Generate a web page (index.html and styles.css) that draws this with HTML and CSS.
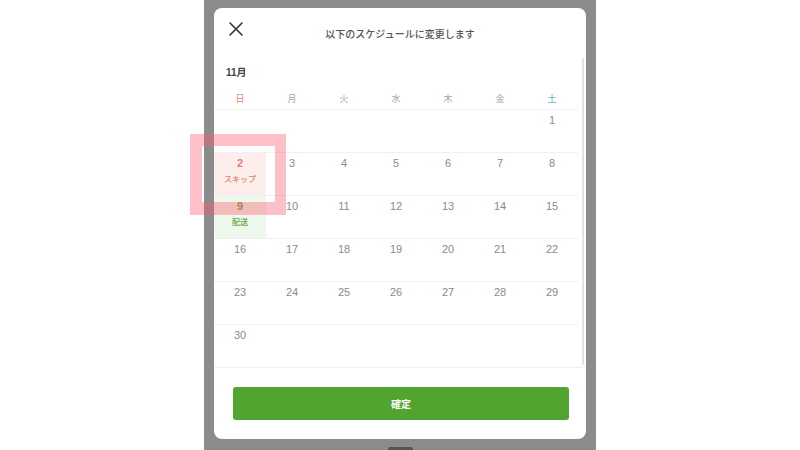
FILE: index.html
```html
<!DOCTYPE html>
<html>
<head>
    <meta charset="utf-8">
    <link rel="stylesheet" href="styles.css">
</head>
<body>
    <div class="screen">
        <div class="modal">
            <div class="modal-header">
                <svg class="close-icon" width="14" height="14" viewBox="0 0 14 14">
                    <path d="M1 1 L13 13 M13 1 L1 13" stroke="#333" stroke-width="1.6" fill="none" stroke-linecap="round"/>
                </svg>
                <div class="modal-title">以下のスケジュールに変更します</div>
            </div>

            <div class="scroll-area">
                <div class="calendar">
                    <div class="month">11月</div>
                    <div class="week-head">
                        <div class="sun">日</div>
                        <div>月</div>
                        <div>火</div>
                        <div>水</div>
                        <div>木</div>
                        <div>金</div>
                        <div class="sat">土</div>
                    </div>
                    <div class="week" id="weeks"></div>
                </div>
                <div class="scrollbar"></div>
            </div>

            <div class="modal-footer">
                <button class="confirm-button">確定</button>
            </div>
        </div>
        <div class="home-bar"></div>
    </div>

    <div class="highlight-box"></div>

    <script>
        var weeks = document.getElementById("weeks");
        var day = 1;
        var startOffset = 6;
        var html = "";

        for (var row = 0; row < 6; row++) {
            html += "<div class='week-row'>";
            for (var col = 0; col < 7; col++) {
                var index = row * 7 + col;
                if (index < startOffset || day > 30) {
                    html += "<div class='cell'></div>";
                    continue;
                }
                if (day === 2) {
                    html += "<div class='cell cell-skip'><div class='num'>2</div><div class='tag'>スキップ</div></div>";
                } else if (day === 9) {
                    html += "<div class='cell cell-delivery'><div class='num'>9</div><div class='tag'>配送</div></div>";
                } else {
                    html += "<div class='cell'><div class='num'>" + day + "</div></div>";
                }
                day++;
            }
            html += "</div>";
        }

        weeks.innerHTML = html;
    </script>
</body>
</html>
```

FILE: styles.css
```css
body {
    margin: 0;
    width: 800px;
    height: 450px;
    background-color: #fff;
    font-family: "Liberation Sans", "Noto Sans CJK JP", sans-serif;
    overflow: hidden;
}

.screen {
    width: 372px;
    height: 450px;
    margin: 0 auto;
    padding: 8px 10px 0;
    background-color: #8b8b8b;
    box-sizing: content-box;
}

.modal {
    height: 431px;
    background-color: #fff;
    border-radius: 8px;
    display: flex;
    flex-direction: column;
}

.modal-header {
    height: 49px;
    display: grid;
    grid-template-columns: 44px 1fr 44px;
}

.close-icon {
    margin: 14px 0 0 15px;
}

.modal-title {
    padding-top: 20px;
    text-align: center;
    font-size: 10px;
    line-height: 13px;
    color: #555;
    font-weight: 500;
}

.scroll-area {
    height: 310px;
    overflow: hidden;
    display: flex;
    border-bottom: 1px solid #f1f1f1;
}

.calendar {
    width: 364px;
    flex: none;
}

.scrollbar {
    width: 2px;
    margin: 1px 2px 2px auto;
    background-color: #e2e2e2;
    border-radius: 1px;
}

.month {
    height: 30px;
    padding: 9px 0 0 12px;
    box-sizing: border-box;
    font-size: 10px;
    line-height: 14px;
    font-weight: bold;
    color: #444;
}

.week-head {
    display: grid;
    grid-template-columns: repeat(7, 52px);
    height: 19px;
    padding-top: 3px;
    border-bottom: 1px solid #f0f0f0;
    font-size: 9px;
    line-height: 19px;
    text-align: center;
    color: #a5a5a5;
}

.week-head .sun {
    color: #e8866c;
}

.week-head .sat {
    color: #5cb6c2;
}

.week-row {
    display: grid;
    grid-template-columns: repeat(7, 52px);
    height: 42px;
    border-bottom: 1px solid #f0f0f0;
}

.week-row:last-child {
    border-bottom: none;
}

.cell {
    text-align: center;
    padding-top: 4px;
    box-sizing: border-box;
}

.num {
    font-size: 11px;
    line-height: 13px;
    color: #8a8a8a;
}

.tag {
    margin-top: 5px;
    font-size: 8px;
    line-height: 10px;
    font-weight: 500;
}

.cell-skip {
    background-color: #fdeeec;
}

.cell-skip .num,
.cell-skip .tag {
    color: #e2836a;
}

.cell-delivery {
    background-color: #eff8ec;
}

.cell-delivery .num,
.cell-delivery .tag {
    color: #5caa3a;
}

.cell-skip .num,
.cell-delivery .num {
    font-weight: bold;
}

.modal-footer {
    flex: 1;
    padding: 19px 17px 0 19px;
}

.confirm-button {
    display: block;
    width: 100%;
    height: 33px;
    border: none;
    border-radius: 3px;
    background-color: #52a431;
    color: #fff;
    font-family: "Liberation Sans", "Noto Sans CJK JP", sans-serif;
    font-size: 10px;
    font-weight: bold;
    cursor: pointer;
}

.home-bar {
    width: 25px;
    height: 3px;
    margin: 8px auto 0;
    background-color: #55554b;
    border-radius: 2px 2px 0 0;
}

.highlight-box {
    position: absolute;
    left: 190px;
    top: 134px;
    width: 73px;
    height: 56px;
    border: 12px solid rgba(246, 90, 104, 0.38);
    border-right-width: 11px;
    border-bottom-width: 13px;
}
```
